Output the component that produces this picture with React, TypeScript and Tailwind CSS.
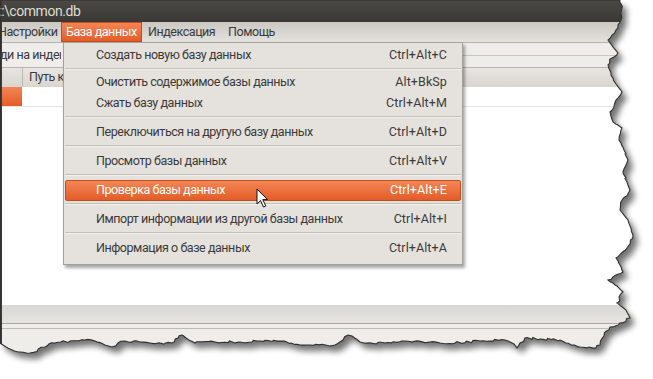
import React from 'react';

type Item = { label: string; keys: string; active?: boolean } | 'sep';

const menuItems: Item[] = [
    { label: 'Создать новую базу данных', keys: 'Ctrl+Alt+C' },
    'sep',
    { label: 'Очистить содержимое базы данных', keys: 'Alt+BkSp' },
    { label: 'Сжать базу данных', keys: 'Ctrl+Alt+M' },
    'sep',
    { label: 'Переключиться на другую базу данных', keys: 'Ctrl+Alt+D' },
    'sep',
    { label: 'Просмотр базы данных', keys: 'Ctrl+Alt+V' },
    'sep',
    { label: 'Проверка базы данных', keys: 'Ctrl+Alt+E', active: true },
    'sep',
    { label: 'Импорт информации из другой базы данных', keys: 'Ctrl+Alt+I' },
    'sep',
    { label: 'Информация о базе данных', keys: 'Ctrl+Alt+A' },
];

// rough outline of the torn paper edge: right side, then bottom
const edge: [number, number][] = [
    [620, 0], [622, 8], [621, 20], [616, 30], [608, 40], [613, 47], [618, 53], [612, 58], [608, 65],
    [611, 75], [616, 84], [622, 92], [616, 100], [610, 112], [613, 122], [622, 128], [619, 140],
    [624, 150], [628, 160], [623, 172], [627, 182], [630, 190], [622, 200], [620, 210], [628, 220],
    [633, 235], [627, 248], [616, 258], [620, 265], [623, 272], [608, 280], [617, 286], [623, 292],
    [617, 303], [626, 310], [630, 318], [620, 323], [610, 327], [604, 336], [600, 345], [596, 348],
    [580, 347], [566, 343], [560, 340], [540, 339], [525, 338], [520, 343], [517, 348], [514, 344],
    [505, 340], [480, 341], [455, 343], [430, 342], [405, 341], [385, 343], [360, 342], [352, 336],
    [348, 335], [343, 340], [335, 345], [310, 345], [300, 345], [280, 341], [260, 341], [240, 342],
    [215, 342], [195, 343], [186, 338], [182, 335], [178, 338], [172, 343], [150, 343], [140, 342],
    [125, 341], [118, 343], [112, 347], [105, 345], [95, 341], [85, 340], [70, 341], [55, 343],
    [45, 347], [30, 353], [20, 352], [10, 349], [3, 345], [0, 343],
];

function tornPath() {
    let seed = 7;
    const rnd = () => {
        seed = (seed * 16807) % 2147483647;
        return seed / 2147483647 - 0.5;
    };
    const pts: string[] = [];
    for (let i = 0; i < edge.length - 1; i++) {
        const [x1, y1] = edge[i];
        const [x2, y2] = edge[i + 1];
        const n = Math.max(1, Math.round(Math.hypot(x2 - x1, y2 - y1) / 3));
        for (let k = 0; k < n; k++) {
            const t = k / n;
            const j = k === 0 ? 0 : rnd() * 2.2;
            pts.push(`${(x1 + (x2 - x1) * t + j).toFixed(1)},${(y1 + (y2 - y1) * t + j).toFixed(1)}`);
        }
    }
    pts.push(`${edge[edge.length - 1][0]},${edge[edge.length - 1][1]}`);
    return 'M0,0 L' + pts.join(' L') + ' Z';
}

function TornEdge() {
    const shape = tornPath();
    const outside = 'M-10,-10 H663 V389 H-10 Z ' + shape;
    return (
        <svg className="pointer-events-none absolute inset-0" width={653} height={379} viewBox="0 0 653 379">
            <defs>
                <filter id="blur" x="-10%" y="-10%" width="120%" height="120%">
                    <feGaussianBlur stdDeviation="3" />
                </filter>
                <clipPath id="out">
                    <path d={outside} clipRule="evenodd" />
                </clipPath>
            </defs>
            <path d={outside} fill="#ffffff" fillRule="evenodd" />
            <g clipPath="url(#out)">
                <path d={shape} transform="translate(5,6)" fill="#000" opacity="0.55" filter="url(#blur)" />
            </g>
            <path d={shape} fill="none" stroke="#2f2f2f" strokeWidth="1.1" />
        </svg>
    );
}

function Cursor() {
    return (
        <svg className="absolute left-[256px] top-[188px]" width={14} height={21} viewBox="0 0 14 21">
            <path d="M1 1 L1 16 L4.5 12.5 L7.5 19 L9.8 18 L6.8 11.6 L11.5 11.6 Z" fill="#fff" stroke="#111" strokeWidth="1" strokeLinejoin="round" />
        </svg>
    );
}

function Menu() {
    return (
        <div className="absolute left-[63px] top-[42px] w-[400px] border border-[#a4a19b] bg-[#e5e2dd] pt-[2px] pb-[5px] shadow-[2px_3px_3px_rgba(0,0,0,0.35)]">
            {menuItems.map((it, i) =>
                it === 'sep' ? (
                    <div key={i} className={i === 1 ? 'h-[6px] px-[1px] pt-[2px]' : 'h-[8px] px-[1px] pt-[2px]'}>
                        <div className="h-[1px] bg-[#c3c0ba]" />
                        <div className="h-[1px] bg-[#f2f0ed]" />
                    </div>
                ) : (
                    <div
                        key={i}
                        className={
                            it.active
                                ? 'mx-[1px] flex h-[21px] items-center justify-between rounded-[2px] border border-[#c24e1c] bg-gradient-to-b from-[#f38554] to-[#e45c26] pl-[30px] pr-[13px] text-white'
                                : 'mx-[1px] flex h-[21px] items-center justify-between border border-transparent pl-[30px] pr-[13px] text-[#3a3a3a]'
                        }
                    >
                        <span>{it.label}</span>
                        <span className="tracking-[0.1px]">{it.keys}</span>
                    </div>
                ),
            )}
        </div>
    );
}

export default function App() {
    return (
        <div className="relative h-[379px] w-[653px] overflow-hidden bg-white font-['Roboto',sans-serif] text-[12.5px] tracking-[-0.45px]">
            <div className="flex h-[360px] w-[640px] flex-col border-l-2 border-[#3a3935] bg-[#efedea]">
                <div className="flex h-[22px] items-center bg-gradient-to-b from-[#4b4a45] to-[#393834] text-[14px] text-[#dfdbd2]">
                    <span className="-ml-[5px]">t:\common.db</span>
                </div>
                <div className="flex h-[20px] items-stretch whitespace-nowrap bg-gradient-to-b from-[#cbc8c2] to-[#e4e2de] text-[#3a3a3a]">
                    <span className="-ml-[4px] flex w-[63px] items-center overflow-hidden">Настройки</span>
                    <span className="flex w-[81px] items-center border border-[#c24e1c] bg-gradient-to-b from-[#f38554] to-[#e45c26] pl-[4px] text-white">База данных</span>
                    <span className="flex w-[80px] items-center pl-[6px]">Индексация</span>
                    <span className="flex items-center pl-[6px]">Помощь</span>
                </div>
                <div className="flex h-[25px] items-center border-t border-[#b4b1ab] bg-[#efedea]">
                    <span className="-ml-[2px] w-[61px] overflow-hidden whitespace-nowrap text-[#3a3a3a]">ди на индексацию</span>
                    <div className="ml-auto h-[1px] w-[440px] bg-[#c9c6c0]" />
                </div>
                <div className="flex h-[20px] items-center border-t border-[#b9b6b0] bg-gradient-to-b from-[#e7e5e1] to-[#d9d6d1] text-[#3a3a3a]">
                    <div className="h-full w-[21px] border-r border-[#bdbab4]" />
                    <span className="w-[40px] overflow-hidden whitespace-nowrap pl-[6px]">Путь к файлу</span>
                </div>
                <div className="h-[218px] bg-white">
                    <div className="flex h-[20px] border-b border-[#e6e4e0]">
                        <div className="h-full w-[20px] bg-gradient-to-b from-[#f38554] to-[#e45c26]" />
                    </div>
                </div>
                <div className="h-[18px] bg-gradient-to-b from-[#d9d7d3] to-[#e6e4e0]" />
                <div className="h-[5px] border-t border-[#aaa7a1] bg-[#efedea]" />
                <div className="flex-1 border-t border-[#bdbab4] bg-[#efedea]" />
            </div>
            <Menu />
            <Cursor />
            <TornEdge />
        </div>
    );
}
